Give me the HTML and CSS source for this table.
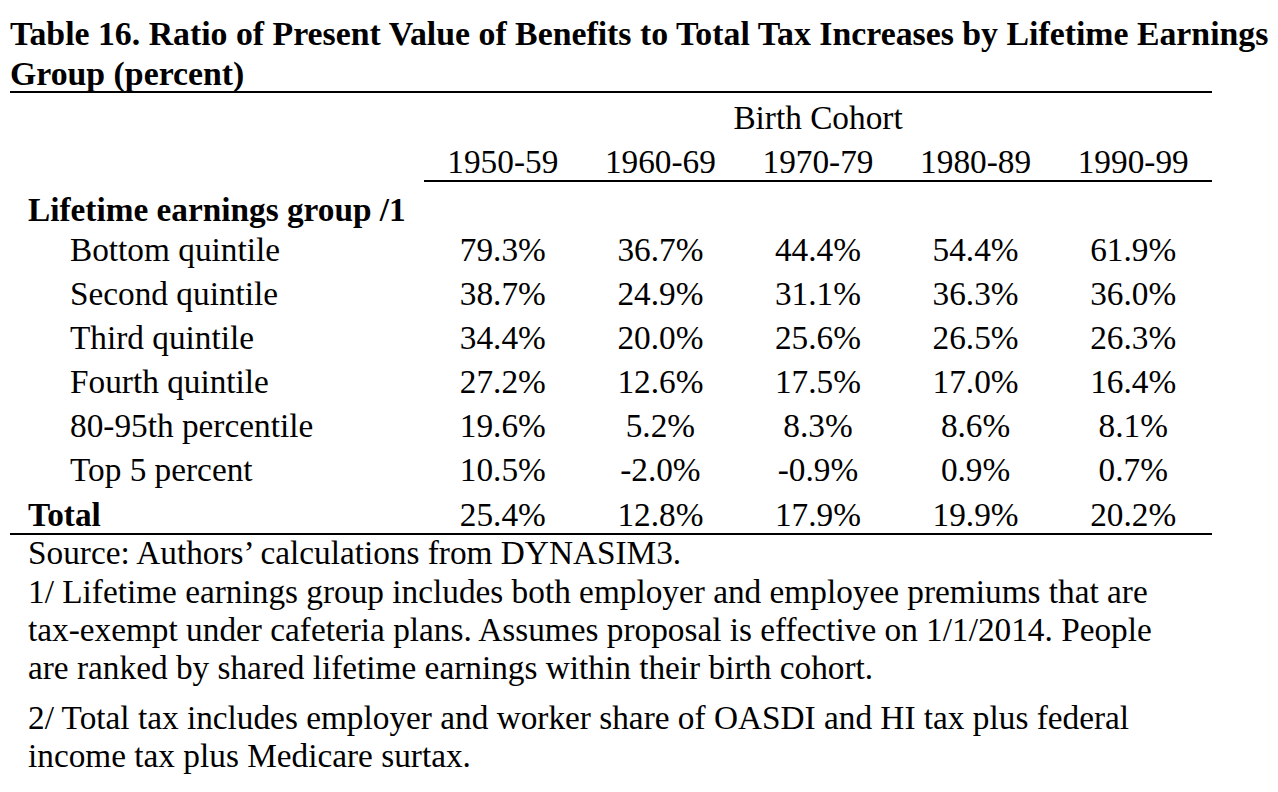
FILE: index.html
```html
<!DOCTYPE html>
<html lang="en">
<head>
<meta charset="utf-8">
<title>Table 16</title>
<link rel="stylesheet" href="styles.css">
</head>
<body>
<div class="page">
  <h1 class="title">Table 16. Ratio of Present Value of Benefits to Total Tax Increases by Lifetime Earnings<br>Group (percent)</h1>
  <table class="data">
    <colgroup>
      <col class="c-label">
      <col class="c-val"><col class="c-val"><col class="c-val"><col class="c-val"><col class="c-val">
    </colgroup>
    <thead>
      <tr class="r-cohort">
        <th></th>
        <th colspan="5" class="cohort">Birth Cohort</th>
      </tr>
      <tr class="r-years">
        <th></th>
        <th class="year">1950-59</th>
        <th class="year">1960-69</th>
        <th class="year">1970-79</th>
        <th class="year">1980-89</th>
        <th class="year">1990-99</th>
      </tr>
    </thead>
    <tbody>
      <tr class="r-group">
        <td class="lbl bold">Lifetime earnings group /1</td>
        <td></td><td></td><td></td><td></td><td></td>
      </tr>
      <tr class="r-row">
        <td class="lbl sub">Bottom quintile</td>
        <td>79.3%</td><td>36.7%</td><td>44.4%</td><td>54.4%</td><td>61.9%</td>
      </tr>
      <tr class="r-row">
        <td class="lbl sub">Second quintile</td>
        <td>38.7%</td><td>24.9%</td><td>31.1%</td><td>36.3%</td><td>36.0%</td>
      </tr>
      <tr class="r-row">
        <td class="lbl sub">Third quintile</td>
        <td>34.4%</td><td>20.0%</td><td>25.6%</td><td>26.5%</td><td>26.3%</td>
      </tr>
      <tr class="r-row">
        <td class="lbl sub">Fourth quintile</td>
        <td>27.2%</td><td>12.6%</td><td>17.5%</td><td>17.0%</td><td>16.4%</td>
      </tr>
      <tr class="r-row">
        <td class="lbl sub">80-95th percentile</td>
        <td>19.6%</td><td>5.2%</td><td>8.3%</td><td>8.6%</td><td>8.1%</td>
      </tr>
      <tr class="r-row">
        <td class="lbl sub">Top 5 percent</td>
        <td>10.5%</td><td>-2.0%</td><td>-0.9%</td><td>0.9%</td><td>0.7%</td>
      </tr>
      <tr class="r-total">
        <td class="lbl bold">Total</td>
        <td>25.4%</td><td>12.8%</td><td>17.9%</td><td>19.9%</td><td>20.2%</td>
      </tr>
    </tbody>
  </table>
  <div class="notes">
    <p class="source">Source: Authors’ calculations from DYNASIM3.</p>
    <p class="note">1/ Lifetime earnings group includes both employer and employee premiums that are<br>tax-exempt under cafeteria plans. Assumes proposal is effective on 1/1/2014. People<br>are ranked by shared lifetime earnings within their birth cohort.</p>
    <p class="note note-2">2/ Total tax includes employer and worker share of OASDI and HI tax plus federal<br>income tax plus Medicare surtax.</p>
  </div>
</div>
</body>
</html>
```

FILE: styles.css
```css
html, body {
  margin: 0;
  padding: 0;
  background: #ffffff;
}

body {
  font-family: "Liberation Serif", "Times New Roman", serif;
  font-size: 33.3px;
  color: #000000;
}

.page {
  padding: 13.8px 0 0 10px;
}

.title {
  margin: 0 0 -2.8px 0;
  font-size: 33.8px;
  font-weight: bold;
  line-height: 40px;
  white-space: nowrap;
}

.data {
  margin-top: 0;
  width: 1202px;
  border-collapse: collapse;
  table-layout: fixed;
  border-top: 2px solid #000;
  border-bottom: 2px solid #000;
}

.c-label { width: 414px; }
.c-val { width: 157.6px; }

.data th,
.data td {
  padding: 0;
  line-height: 38px;
  font-weight: normal;
  text-align: center;
  white-space: nowrap;
}

.r-cohort th { padding-top: 5.8px; }
.r-years th { padding-top: 7.5px; line-height: 36px; }
.data th.year { border-bottom: 2px solid #000; }

.r-group td { padding-top: 11px; padding-bottom: 0; line-height: 36px; }
.r-row td { padding-top: 3px; padding-bottom: 3px; }
.r-total td { padding-top: 3.5px; padding-bottom: 0; line-height: 37px; }

.data td.lbl { text-align: left; }
.data td.bold { font-weight: bold; padding-left: 18px; }
.data td.sub { padding-left: 60px; }

.notes {
  padding-left: 18px;
}

.notes p { margin: 0; }

.source {
  line-height: 24px;
  padding-top: 6px;
}

.note {
  line-height: 38px;
  padding-top: 8.5px;
}

.note-2 { padding-top: 12px; }
```
